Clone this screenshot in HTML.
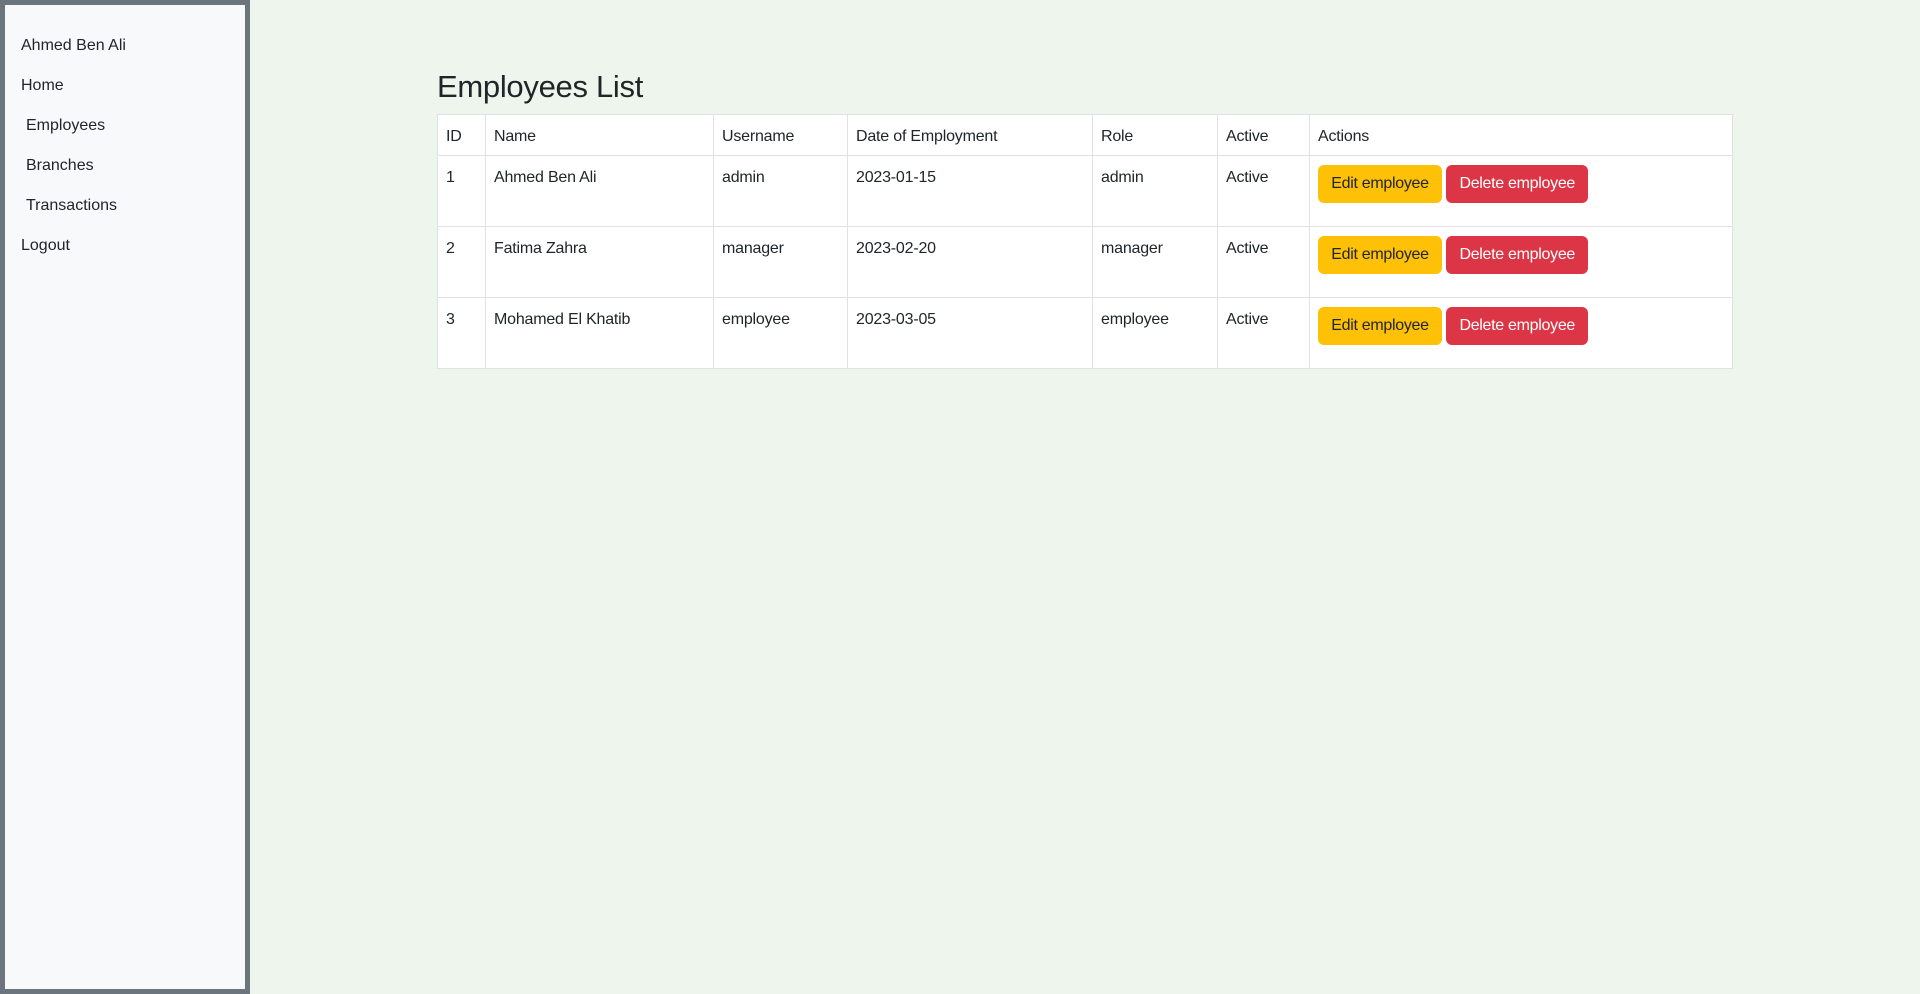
<!DOCTYPE html>
<html><head><meta charset="utf-8"><style>
*{box-sizing:border-box;margin:0;padding:0}
body{width:1920px;height:994px;background:#eef5ec;font-family:"Liberation Sans",sans-serif;color:#212529;font-size:16px;overflow:hidden;position:relative}
.side{position:absolute;left:0;top:0;width:250px;height:994px;background:#f8f9fa;border:5px solid #6c757d}
.side div{position:absolute;left:16px;font-size:16px;line-height:24px}
h2{position:absolute;left:437px;top:67px;font-size:31px;font-weight:400;line-height:40px;letter-spacing:-0.3px}
table{position:absolute;left:437px;top:114px;width:1296px;border-collapse:collapse;background:#fff;table-layout:fixed}
td,th{border:1px solid #dee2e6;padding:10px 8px 6px;vertical-align:top;text-align:left;font-weight:400;line-height:24px;font-size:16px;letter-spacing:-0.2px}
th{height:41px}
td{height:71px}
td.a{padding-top:8px}
.b{display:inline-block;height:38px;line-height:38px;border-radius:6px;margin-top:1px;text-align:center;letter-spacing:-0.3px}
.e{background:#ffc107;color:#212529;width:124px}
.d{background:#dc3545;color:#fff;width:142px;margin-left:0}
</style></head><body>
<div class="side">
<div style="top:29px">Ahmed Ben Ali</div>
<div style="top:69px">Home</div>
<div style="top:109px;left:21px">Employees</div>
<div style="top:149px;left:21px">Branches</div>
<div style="top:189px;left:21px">Transactions</div>
<div style="top:229px">Logout</div>
</div>
<h2>Employees List</h2>
<table>
<colgroup><col style="width:48px"><col style="width:228px"><col style="width:134px"><col style="width:245px"><col style="width:125px"><col style="width:92px"><col></colgroup>
<tr><th>ID</th><th>Name</th><th>Username</th><th>Date of Employment</th><th>Role</th><th>Active</th><th>Actions</th></tr>
<tr><td>1</td><td>Ahmed Ben Ali</td><td>admin</td><td>2023-01-15</td><td>admin</td><td>Active</td><td class="a"><span class="b e">Edit employee</span> <span class="b d">Delete employee</span></td></tr>
<tr><td>2</td><td>Fatima Zahra</td><td>manager</td><td>2023-02-20</td><td>manager</td><td>Active</td><td class="a"><span class="b e">Edit employee</span> <span class="b d">Delete employee</span></td></tr>
<tr><td>3</td><td>Mohamed El Khatib</td><td>employee</td><td>2023-03-05</td><td>employee</td><td>Active</td><td class="a"><span class="b e">Edit employee</span> <span class="b d">Delete employee</span></td></tr>
</table>
</body></html>
